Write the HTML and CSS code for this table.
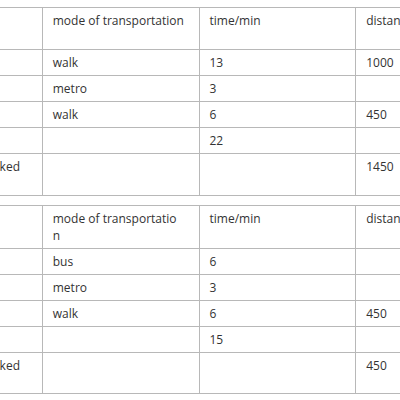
FILE: index.html
```html
<!DOCTYPE html>
<html>
<head>
<meta charset="utf-8">
<link rel="stylesheet" href="styles.css">
</head>
<body>
<div class="page">
  <table class="grid">
    <tr class="head">
      <td>step</td>
      <td>mode of transportation</td>
      <td>time/min</td>
      <td>distance/m</td>
    </tr>
    <tr><td>1</td><td>walk</td><td>13</td><td>1000</td></tr>
    <tr><td>2</td><td>metro</td><td>3</td><td></td></tr>
    <tr><td>3</td><td>walk</td><td>6</td><td>450</td></tr>
    <tr><td>total</td><td></td><td>22</td><td></td></tr>
    <tr class="foot"><td>total distance walked</td><td></td><td></td><td>1450</td></tr>
  </table>
  <table class="grid second">
    <tr class="head">
      <td>step</td>
      <td class="wrap">mode of transportation</td>
      <td>time/min</td>
      <td>distance/m</td>
    </tr>
    <tr><td>1</td><td>bus</td><td>6</td><td></td></tr>
    <tr><td>2</td><td>metro</td><td>3</td><td></td></tr>
    <tr><td>3</td><td>walk</td><td>6</td><td>450</td></tr>
    <tr><td>total</td><td></td><td>15</td><td></td></tr>
    <tr class="foot"><td>total distance walked</td><td></td><td></td><td>450</td></tr>
  </table>
</div>
</body>
</html>
```
FILE: styles.css
```css
html, body {
  margin: 0;
  padding: 0;
  background: #ffffff;
  overflow: hidden;
}
.page {
  padding-top: 7px;
  display: flex;
  flex-direction: column;
  gap: 9px;
  font-family: "Open Sans", "Noto Sans", sans-serif;
  font-size: 12px;
  color: #333333;
}
.grid {
  border-collapse: collapse;
  table-layout: fixed;
  width: 628px;
  margin-left: -115px;
}
.grid td {
  border: 1px solid #b8b8b8;
  padding: 4px 10px;
  line-height: 17px;
  height: 17px;
  vertical-align: top;
  text-align: left;
  white-space: nowrap;
}
.grid td:first-child {
  padding-left: 16px;
}
.grid .head td,
.grid .foot td {
  height: 33px;
}
.second .head td {
  height: 34px;
}
.second .foot td {
  height: 32px;
}
.grid .wrap {
  white-space: normal;
  word-break: break-all;
  padding-right: 20px;
}
```
